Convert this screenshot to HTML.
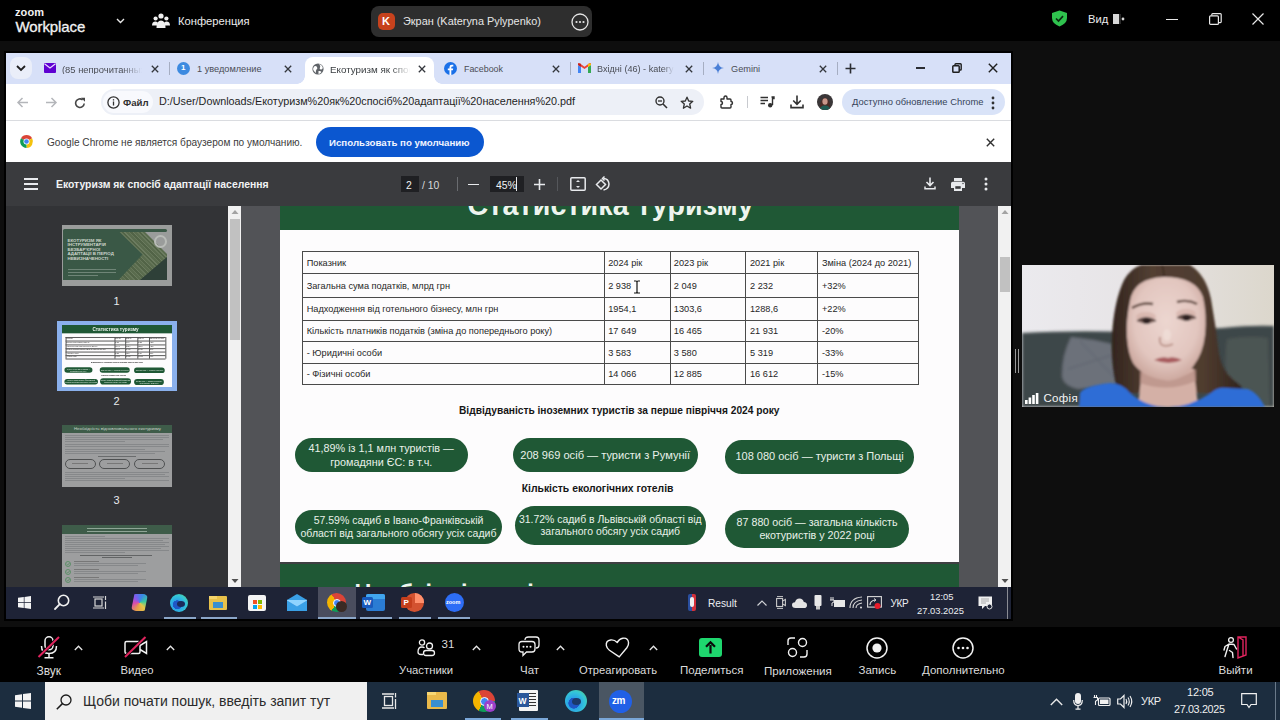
<!DOCTYPE html>
<html><head><meta charset="utf-8">
<style>
*{box-sizing:border-box}
html,body{margin:0;padding:0}
body{width:1280px;height:720px;overflow:hidden;background:#0e0e0e;position:relative;font-family:"Liberation Sans",sans-serif}
.a{position:absolute}
.t{position:absolute;white-space:nowrap;line-height:1}
svg{position:absolute;overflow:visible}
.thumb div[style*="height:1px;background:#4a4a4a"]{height:6px!important;background:#555!important}
.thumb div[style*="width:1px;height"]{width:6px!important;background:#555!important}
</style></head><body>


<!-- ZOOM TOP BAR -->
<div class="a" style="left:0;top:0;width:1280px;height:41px;background:#000"></div>
<div class="t" style="left:15px;top:7px;font-size:11px;font-weight:700;color:#f2f2f2;letter-spacing:0.1px">zoom</div>
<div class="t" style="left:15.5px;top:18.5px;font-size:15px;color:#f2f2f2;-webkit-text-stroke:0.3px #f2f2f2;letter-spacing:-0.1px">Workplace</div>
<svg style="left:116px;top:18px" width="9" height="6"><path d="M1 1 L4.5 4.5 L8 1" fill="none" stroke="#e8e8e8" stroke-width="1.4"/></svg>
<svg style="left:152px;top:13px" width="18" height="16" viewBox="0 0 18 16">
 <circle cx="9" cy="3" r="2.6" fill="#f0f0f0"/><circle cx="3.6" cy="5.5" r="2.1" fill="#f0f0f0"/><circle cx="14.4" cy="5.5" r="2.1" fill="#f0f0f0"/>
 <path d="M4.5 15 Q4.5 7.5 9 7.5 Q13.5 7.5 13.5 15 Z" fill="#f0f0f0"/>
 <path d="M0 12.5 Q0 8.5 3.6 8.5 Q5.5 8.5 6 10 L5 12.5 Z" fill="#f0f0f0"/><path d="M18 12.5 Q18 8.5 14.4 8.5 Q12.5 8.5 12 10 L13 12.5 Z" fill="#f0f0f0"/>
</svg>
<div class="t" style="left:178px;top:16px;font-size:11.2px;color:#ececec">Конференция</div>
<div class="a" style="left:371px;top:6px;width:221px;height:31px;background:#2e2e2e;border-radius:8px"></div>
<div class="a" style="left:378px;top:13px;width:17px;height:17px;background:#c7421d;border-radius:5px"></div>
<div class="t" style="left:382px;top:16px;font-size:11px;font-weight:700;color:#fff">K</div>
<div class="t" style="left:403px;top:15.5px;font-size:10.9px;color:#e6e6e6">Экран (Kateryna Pylypenko)</div>
<svg style="left:571px;top:13px" width="18" height="18"><circle cx="9" cy="9" r="8" fill="none" stroke="#e6e6e6" stroke-width="1.3"/><circle cx="5.5" cy="9" r="1.1" fill="#e6e6e6"/><circle cx="9" cy="9" r="1.1" fill="#e6e6e6"/><circle cx="12.5" cy="9" r="1.1" fill="#e6e6e6"/></svg>
<svg style="left:1051px;top:10px" width="17" height="17" viewBox="0 0 17 17"><path d="M8.5 0.5 L16 3 L16 8 Q16 13.5 8.5 16.5 Q1 13.5 1 8 L1 3 Z" fill="#2fc24e"/><path d="M5 8.5 L7.5 11 L12 6.2" fill="none" stroke="#0a2a10" stroke-width="1.7"/></svg>
<div class="t" style="left:1088px;top:13.5px;font-size:11.2px;color:#ececec">Вид</div>
<svg style="left:1113px;top:14px" width="12" height="10"><rect x="0" y="0" width="6" height="10" fill="#d8d8d8"/><rect x="6.5" y="0" width="1" height="10" fill="#555"/><circle cx="10" cy="5" r="1.4" fill="#d8d8d8"/></svg>
<div class="a" style="left:1166px;top:18.5px;width:12px;height:1.5px;background:#e8e8e8"></div>
<svg style="left:1209px;top:13px" width="13" height="12"><rect x="0.6" y="2.8" width="8.8" height="8.6" rx="1" fill="none" stroke="#e8e8e8" stroke-width="1.2"/><path d="M2.8 2.6 L2.8 1.5 Q2.8 0.6 3.7 0.6 L11.4 0.6 Q12.2 0.6 12.2 1.5 L12.2 8.8 Q12.2 9.6 11.4 9.6 L9.8 9.6" fill="none" stroke="#e8e8e8" stroke-width="1.2"/></svg>
<svg style="left:1252px;top:13px" width="12" height="12"><path d="M0.5 0.5 L11.5 11.5 M11.5 0.5 L0.5 11.5" stroke="#e8e8e8" stroke-width="1.2"/></svg>


<!-- SHARED SCREEN frame -->
<div class="a" style="left:4px;top:51px;width:1009px;height:570px;background:#000"></div>


<!-- Chrome tab strip -->
<div class="a" style="left:6px;top:53px;width:1005px;height:31px;background:#d7e0f8"></div>
<div class="a" style="left:10px;top:57px;width:22px;height:22px;background:#eaeef9;border-radius:8px"></div>
<svg style="left:16px;top:65px" width="10" height="6"><path d="M1 1 L5 5 L9 1" fill="none" stroke="#1f1f1f" stroke-width="1.8"/></svg>
<!-- tab1 -->
<svg style="left:44px;top:63px" width="12" height="10" viewBox="0 0 12 10"><rect x="0" y="0" width="12" height="10" rx="1" fill="#5f01d1"/><path d="M0.5 0.8 L6 5 L11.5 0.8" fill="none" stroke="#e8d8ff" stroke-width="1.2"/></svg>
<div class="t" style="left:62px;top:65px;font-size:9.4px;color:#4a4d55;width:80px;overflow:hidden;-webkit-mask-image:linear-gradient(90deg,#000 75%,transparent)">(85 непрочитанных</div>
<svg style="left:151px;top:64.5px" width="8" height="8"><path d="M0.8 0.8 L7.2 7.2 M7.2 0.8 L0.8 7.2" stroke="#33363c" stroke-width="1.3"/></svg>
<div class="a" style="left:169px;top:62px;width:1px;height:13px;background:#a6aec2"></div>
<!-- tab2 -->
<div class="a" style="left:177px;top:61.5px;width:13px;height:13px;border-radius:50%;background:#3d8ae0"></div>
<div class="t" style="left:181px;top:64px;font-size:8px;font-weight:700;color:#fff">1</div>
<div class="t" style="left:197px;top:65px;font-size:9.2px;color:#4a4d55">1 уведомление</div>
<svg style="left:284px;top:64.5px" width="8" height="8"><path d="M0.8 0.8 L7.2 7.2 M7.2 0.8 L0.8 7.2" stroke="#33363c" stroke-width="1.3"/></svg>
<!-- active tab -->
<div class="a" style="left:305px;top:57px;width:129px;height:27px;background:#fff;border-radius:8px 8px 0 0"></div>
<div class="a" style="left:297px;top:76px;width:8px;height:8px;background:radial-gradient(circle at 0 0,transparent 7.5px,#fff 8px)"></div>
<div class="a" style="left:434px;top:76px;width:8px;height:8px;background:radial-gradient(circle at 100% 0,transparent 7.5px,#fff 8px)"></div>
<svg style="left:312px;top:62.5px" width="12" height="12" viewBox="0 0 12 12"><circle cx="6" cy="6" r="5.6" fill="#5f6368"/><path d="M2 3.5 Q4 2.5 5 4 Q6 5.5 4.5 6.5 Q3.5 7.5 4 10 Q1.5 8.5 1 6 Z M7 1 Q9 3 8 4.5 Q7 5.5 8.5 6.5 Q10 7 10.8 5 Q10.5 2 7 1 Z M6.5 8 Q8.5 7.5 9.5 9 Q8 10.8 6.5 11 Z" fill="#fff"/></svg>
<div class="t" style="left:330px;top:65px;font-size:9.8px;color:#3c4043;width:80px;overflow:hidden;-webkit-mask-image:linear-gradient(90deg,#000 78%,transparent)">Екотуризм як спосіб</div>
<svg style="left:418px;top:64.5px" width="8" height="8"><path d="M0.8 0.8 L7.2 7.2 M7.2 0.8 L0.8 7.2" stroke="#33363c" stroke-width="1.3"/></svg>
<!-- tab4 facebook -->
<svg style="left:444px;top:61.5px" width="13" height="13" viewBox="0 0 13 13"><circle cx="6.5" cy="6.5" r="6.5" fill="#1a70e8"/><path d="M7.3 13 L7.3 8.2 L8.9 8.2 L9.2 6.4 L7.3 6.4 L7.3 5.3 Q7.3 4.4 8.3 4.4 L9.3 4.4 L9.3 2.8 Q8.6 2.7 7.9 2.7 Q5.5 2.7 5.5 5.1 L5.5 6.4 L3.8 6.4 L3.8 8.2 L5.5 8.2 L5.5 13 Z" fill="#fff"/></svg>
<div class="t" style="left:464px;top:65px;font-size:8.9px;color:#4a4d55">Facebook</div>
<svg style="left:552px;top:64.5px" width="8" height="8"><path d="M0.8 0.8 L7.2 7.2 M7.2 0.8 L0.8 7.2" stroke="#33363c" stroke-width="1.3"/></svg>
<div class="a" style="left:570px;top:62px;width:1px;height:13px;background:#a6aec2"></div>
<!-- tab5 gmail -->
<svg style="left:578px;top:63px" width="13" height="10" viewBox="0 0 13 10"><path d="M0 2 L0 10 L3 10 L3 4 Z" fill="#4285f4"/><path d="M10 4 L10 10 L13 10 L13 2 Z" fill="#34a853"/><path d="M0 1.5 L6.5 6 L13 1.5 L13 0.5 Q12 -0.3 11 0.5 L6.5 3.8 L2 0.5 Q1 -0.3 0 0.5 Z" fill="#ea4335"/><path d="M10 0.8 L13 0.5 L13 2 L10 4 Z" fill="#fbbc04"/><path d="M0 0.5 L3 0.8 L3 4 L0 2 Z" fill="#c5221f"/></svg>
<div class="t" style="left:597px;top:65px;font-size:9.1px;color:#4a4d55;width:77px;overflow:hidden;-webkit-mask-image:linear-gradient(90deg,#000 85%,transparent)">Вхідні (46) - kateryna</div>
<svg style="left:685px;top:64.5px" width="8" height="8"><path d="M0.8 0.8 L7.2 7.2 M7.2 0.8 L0.8 7.2" stroke="#33363c" stroke-width="1.3"/></svg>
<div class="a" style="left:703px;top:62px;width:1px;height:13px;background:#a6aec2"></div>
<!-- tab6 gemini -->
<svg style="left:712px;top:62px" width="12" height="12" viewBox="0 0 12 12"><path d="M6 0 Q6.5 5.5 12 6 Q6.5 6.5 6 12 Q5.5 6.5 0 6 Q5.5 5.5 6 0 Z" fill="#4a7fd6"/></svg>
<div class="t" style="left:731px;top:65px;font-size:9.2px;color:#4a4d55">Gemini</div>
<svg style="left:819px;top:64.5px" width="8" height="8"><path d="M0.8 0.8 L7.2 7.2 M7.2 0.8 L0.8 7.2" stroke="#33363c" stroke-width="1.3"/></svg>
<div class="a" style="left:837px;top:62px;width:1px;height:13px;background:#a6aec2"></div>
<svg style="left:845px;top:63px" width="11" height="11"><path d="M5.5 0.5 L5.5 10.5 M0.5 5.5 L10.5 5.5" stroke="#2b2d33" stroke-width="1.6"/></svg>
<!-- window controls -->
<div class="a" style="left:916px;top:67px;width:9px;height:1.6px;background:#2b2d33"></div>
<svg style="left:952px;top:63px" width="10" height="10"><rect x="0.8" y="2.8" width="6.4" height="6.4" rx="0.8" fill="none" stroke="#1f1f1f" stroke-width="1.5"/><path d="M3 2.5 L3 1.6 Q3 0.8 3.8 0.8 L8.4 0.8 Q9.2 0.8 9.2 1.6 L9.2 6.2 Q9.2 7 8.4 7 L7.5 7" fill="none" stroke="#1f1f1f" stroke-width="1.4"/></svg>
<svg style="left:988px;top:63px" width="10" height="10"><path d="M0.8 0.8 L9.2 9.2 M9.2 0.8 L0.8 9.2" stroke="#1f1f1f" stroke-width="1.4"/></svg>

<!-- toolbar -->
<div class="a" style="left:6px;top:84px;width:1005px;height:37px;background:#fff;border-bottom:1px solid #dadce0"></div>
<svg style="left:17px;top:97px" width="12" height="11"><path d="M11 5.5 L1.2 5.5 M5.5 1 L1 5.5 L5.5 10" fill="none" stroke="#b4b6ba" stroke-width="1.5"/></svg>
<svg style="left:45px;top:97px" width="12" height="11"><path d="M1 5.5 L10.8 5.5 M6.5 1 L11 5.5 L6.5 10" fill="none" stroke="#b4b6ba" stroke-width="1.5"/></svg>
<svg style="left:74px;top:96.5px" width="12" height="12" viewBox="0 0 12 12"><path d="M10.2 6.5 A4.3 4.3 0 1 1 8.6 2.8" fill="none" stroke="#474747" stroke-width="1.6"/><path d="M7 0.8 L11 0.8 L11 4.8 Z" fill="#474747"/></svg>
<div class="a" style="left:101px;top:89px;width:603px;height:26px;background:#edf0f7;border-radius:13px"></div>
<div class="a" style="left:103px;top:91px;width:50px;height:22px;background:#f8f9fd;border-radius:11px"></div>
<svg style="left:107px;top:96px" width="13" height="13" viewBox="0 0 13 13"><circle cx="6.5" cy="6.5" r="5.6" fill="none" stroke="#303030" stroke-width="1.3"/><rect x="5.85" y="5.5" width="1.3" height="4" fill="#303030"/><rect x="5.85" y="3.2" width="1.3" height="1.3" fill="#303030"/></svg>
<div class="t" style="left:123px;top:97.5px;font-size:9.6px;font-weight:700;color:#303030">Файл</div>
<div class="t" style="left:159px;top:96px;font-size:10.8px;color:#1f1f1f">D:/User/Downloads/Екотуризм%20як%20спосіб%20адаптації%20населення%20.pdf</div>
<svg style="left:655px;top:96px" width="13" height="13" viewBox="0 0 13 13"><circle cx="5" cy="5" r="4" fill="none" stroke="#303030" stroke-width="1.4"/><path d="M8 8 L12 12" stroke="#303030" stroke-width="1.6"/><path d="M3 5 L7 5" stroke="#303030" stroke-width="1.3"/></svg>
<svg style="left:680px;top:95.5px" width="14" height="14" viewBox="0 0 14 14"><path d="M7 1.2 L8.7 5 L12.8 5.3 L9.7 8 L10.6 12.2 L7 10 L3.4 12.2 L4.3 8 L1.2 5.3 L5.3 5 Z" fill="none" stroke="#303030" stroke-width="1.3" stroke-linejoin="round"/></svg>
<svg style="left:720px;top:95px" width="13" height="14" viewBox="0 0 13 14"><path d="M1 4 L4 4 L4 2.5 Q4 1 5.5 1 Q7 1 7 2.5 L7 4 L10 4 Q11 4 11 5 L11 6.5 Q12.5 6.5 12.5 8 Q12.5 9.5 11 9.5 L11 12 Q11 13 10 13 L2 13 Q1 13 1 12 L1 9.5 Q2.5 9.5 2.5 8 Q2.5 6.5 1 6.5 Z" fill="none" stroke="#303030" stroke-width="1.4" stroke-linejoin="round"/></svg>
<div class="a" style="left:747px;top:96px;width:1px;height:12px;background:#c8cacf"></div>
<svg style="left:760px;top:96px" width="15" height="12" viewBox="0 0 15 12"><path d="M0.5 1.5 L8 1.5 M0.5 4.5 L8 4.5 M0.5 7.5 L5 7.5" stroke="#303030" stroke-width="1.4"/><path d="M11.5 1 L14 1 L14 2.5 L12.5 2.5 L12.5 9" fill="none" stroke="#303030" stroke-width="1.4"/><circle cx="10.2" cy="9.3" r="2.2" fill="#303030"/></svg>
<svg style="left:790px;top:95px" width="14" height="14" viewBox="0 0 14 14"><path d="M7 0.5 L7 9 M3.2 5.5 L7 9.3 L10.8 5.5" fill="none" stroke="#303030" stroke-width="1.6"/><path d="M1 9.5 L1 12.6 L13 12.6 L13 9.5" fill="none" stroke="#303030" stroke-width="1.6"/></svg>
<svg style="left:817px;top:94px" width="16" height="16" viewBox="0 0 16 16"><defs><clipPath id="avc"><circle cx="8" cy="8" r="8"/></clipPath></defs><g clip-path="url(#avc)"><rect width="16" height="16" fill="#3a3638"/><path d="M3 16 Q2 6 8 3.5 Q14 6 13 16 Z" fill="#4a2a24"/><ellipse cx="8" cy="7.5" rx="2.6" ry="3.2" fill="#c9978a"/><path d="M2 16 Q4 11 8 11.5 Q12 11 14 16 Z" fill="#1f5a52"/></g></svg>
<div class="a" style="left:842px;top:89px;width:163px;height:26px;background:#d9e3f8;border-radius:13px"></div>
<div class="t" style="left:852px;top:97px;font-size:9.4px;color:#37435a">Доступно обновление Chrome</div>
<svg style="left:991px;top:95.5px" width="4" height="14"><circle cx="2" cy="2" r="1.4" fill="#303030"/><circle cx="2" cy="7" r="1.4" fill="#303030"/><circle cx="2" cy="12" r="1.4" fill="#303030"/></svg>

<!-- infobar -->
<div class="a" style="left:6px;top:121px;width:1005px;height:41px;background:#fff"></div>
<svg style="left:19.5px;top:135px" width="13" height="13" viewBox="0 0 13 13"><path d="M6.5 6.5 L1.0 3.3 A6.4 6.4 0 0 1 12.1 3.3 Z" fill="#db4437"/><path d="M6.5 6.5 L12.1 3.3 A6.4 6.4 0 0 1 6.5 12.9 Z" fill="#f4c20d"/><path d="M6.5 6.5 L6.5 12.9 A6.4 6.4 0 0 1 1.0 3.3 Z" fill="#0f9d58"/><circle cx="6.5" cy="6.5" r="3" fill="#fff"/><circle cx="6.5" cy="6.5" r="2.3" fill="#4285f4"/></svg>
<div class="t" style="left:47px;top:137.5px;font-size:10.1px;color:#3c3c3c">Google Chrome не является браузером по умолчанию.</div>
<div class="a" style="left:316px;top:127px;width:168px;height:29.5px;background:#0b57d0;border-radius:15px"></div>
<div class="t" style="left:329px;top:138px;font-size:9.7px;font-weight:700;color:#f0f4ff">Использовать по умолчанию</div>
<svg style="left:986px;top:137.5px" width="9" height="9"><path d="M0.8 0.8 L8.2 8.2 M8.2 0.8 L0.8 8.2" stroke="#303030" stroke-width="1.4"/></svg>

<!-- pdf toolbar -->
<div class="a" style="left:6px;top:162px;width:1005px;height:44px;background:#3a3b3e"></div>
<svg style="left:24px;top:178px" width="14" height="12"><path d="M0 1 L14 1 M0 6 L14 6 M0 11 L14 11" stroke="#e8eaed" stroke-width="1.8"/></svg>
<div class="t" style="left:56px;top:180px;font-size:10.4px;font-weight:700;color:#f1f3f4">Екотуризм як спосіб адаптації населення</div>
<div class="a" style="left:401px;top:176px;width:18px;height:16px;background:#1f2023"></div>
<div class="t" style="left:406px;top:180.5px;font-size:10.4px;color:#f1f3f4">2</div>
<div class="t" style="left:422px;top:180.5px;font-size:10.4px;color:#d8dadc">/ 10</div>
<div class="a" style="left:457px;top:177px;width:1px;height:14px;background:#6a6c70"></div>
<div class="a" style="left:468px;top:183.5px;width:11px;height:1.6px;background:#e8eaed"></div>
<div class="a" style="left:490px;top:176px;width:34px;height:16px;background:#1f2023"></div>
<div class="t" style="left:496px;top:180.5px;font-size:10.4px;color:#f1f3f4">45%</div>
<div class="a" style="left:516px;top:177px;width:1px;height:14px;background:#e8eaed"></div>
<svg style="left:533.5px;top:178.5px" width="11" height="11"><path d="M5.5 0 L5.5 11 M0 5.5 L11 5.5" stroke="#e8eaed" stroke-width="1.6"/></svg>
<div class="a" style="left:557px;top:177px;width:1px;height:14px;background:#55575b"></div>
<svg style="left:570px;top:177px" width="16" height="14" viewBox="0 0 16 14"><rect x="0.8" y="0.8" width="14.4" height="12.4" rx="1" fill="none" stroke="#e8eaed" stroke-width="1.5"/><path d="M6 5 L8 3 L10 5 Z M6 9 L8 11 L10 9 Z" fill="#e8eaed"/></svg>
<svg style="left:595px;top:176px" width="16" height="16" viewBox="0 0 16 16"><path d="M1.5 8.5 L6 4 L10.5 8.5 L6 13 Z" fill="none" stroke="#e8eaed" stroke-width="1.5"/><path d="M8.5 2.5 Q13.5 2.5 14 8 Q13.8 13 8.5 14" fill="none" stroke="#e8eaed" stroke-width="1.5"/><path d="M9.5 0.5 L7.5 2.5 L9.5 4.5" fill="none" stroke="#e8eaed" stroke-width="1.5"/></svg>
<svg style="left:924px;top:177px" width="12" height="13" viewBox="0 0 12 13"><path d="M6 0.5 L6 8.5 M2.5 5 L6 8.5 L9.5 5" fill="none" stroke="#e8eaed" stroke-width="1.6"/><path d="M1 9.5 L1 11.8 L11 11.8 L11 9.5" fill="none" stroke="#e8eaed" stroke-width="1.5"/></svg>
<svg style="left:950.5px;top:177.5px" width="14" height="13" viewBox="0 0 14 13"><rect x="3" y="0" width="8" height="3.2" fill="#e8eaed"/><path d="M0 5.5 Q0 3.8 1.7 3.8 L12.3 3.8 Q14 3.8 14 5.5 L14 10 L11 10 L11 13 L3 13 L3 10 L0 10 Z" fill="#e8eaed"/><rect x="4.3" y="8.2" width="5.4" height="2.6" fill="#3a3b3e"/><circle cx="12" cy="5.5" r="0.7" fill="#3a3b3e"/></svg>
<svg style="left:984px;top:177px" width="4" height="14"><circle cx="2" cy="2" r="1.5" fill="#e8eaed"/><circle cx="2" cy="7" r="1.5" fill="#e8eaed"/><circle cx="2" cy="12" r="1.5" fill="#e8eaed"/></svg>

<!-- sidebar -->
<div class="a" style="left:6px;top:206px;width:222px;height:381px;background:#323336;overflow:hidden">
 <!-- thumb1 -->
 <div class="a" style="left:56px;top:19px;width:110px;height:61px;background:#9a9c9b;overflow:hidden">
  <div class="a" style="left:0.5px;top:6px;width:104px;height:49px;background:#3a5846"></div>
  <div class="a" style="left:52px;top:6px;width:53px;height:49px;background:repeating-linear-gradient(45deg,#5a6c4e 0 2px,#66775a 2px 3px,#526447 3px 5px,#6c7c60 5px 6px)"></div>
  <div class="a" style="left:0.5px;top:6px;width:80px;height:49px;background:#3a5846;clip-path:polygon(0 0,70% 0,100% 48%,70% 100%,0 100%)"></div>
  <div class="a" style="left:82px;top:6px;width:28px;height:28px;background:#9a9c9b;clip-path:polygon(0 0,100% 0,100% 100%)"></div>
  <div class="a" style="left:92px;top:10px;width:13px;height:13px;border-radius:50%;border:2.5px solid #b9bcb8"></div>
  <div class="a" style="left:78px;top:32px;width:27px;height:23px;background:#2e4038;clip-path:polygon(100% 0,100% 100%,0 100%)"></div>
  <div class="a" style="left:0.5px;top:4px;width:104px;height:3px;background:#3a5846;border-radius:2px"></div>
  <div class="t" style="left:5.5px;top:14px;font-size:4.4px;font-weight:700;color:#cdd5cd;line-height:4.4px">ЕКОТУРИЗМ ЯК<br>ІНСТРУМЕНТАРІЙ<br>БЕЗБАР'ЄРНОЇ<br>АДАПТАЦІЇ В ПЕРІОД<br>НЕВИЗНАЧЕНОСТІ</div>
  <div class="a" style="left:6px;top:44px;width:48px;height:1px;background:#6f8577"></div>
  <div class="a" style="left:6px;top:47px;width:48px;height:1px;background:#6f8577"></div>
  <div class="a" style="left:6px;top:50px;width:30px;height:1px;background:#6f8577"></div>
 </div>
 <div class="t" style="left:107.5px;top:90px;font-size:11px;color:#e8eaed">1</div>
 <!-- thumb2 -->
 <div class="a" style="left:51px;top:114.5px;width:120px;height:70.5px;background:#8ab0ec"></div>
 <div class="a" style="left:56px;top:119px;width:110px;height:61.5px;background:#fdfcfd;overflow:hidden">
  <div class="a thumb" style="left:0;top:0;width:679px;height:384.5px;transform:scale(0.162);transform-origin:0 0">
<div class="a" style="left:0;top:0;width:679px;height:53px;background:#1f5835"></div>
<div class="t" style="left:187.5px;top:14px;font-size:28.7px;font-weight:700;color:#eef4ee;letter-spacing:0.1px">Статистика туризму</div>
<div class="a" style="left:0;top:53px;width:679px;height:331.5px;background:#fdfcfd"></div>
<div class="a" style="left:22px;top:74px;width:617px;height:1px;background:#4a4a4a"></div>
<div class="a" style="left:22px;top:96px;width:617px;height:1px;background:#4a4a4a"></div>
<div class="a" style="left:22px;top:120px;width:617px;height:1px;background:#4a4a4a"></div>
<div class="a" style="left:22px;top:143px;width:617px;height:1px;background:#4a4a4a"></div>
<div class="a" style="left:22px;top:164px;width:617px;height:1px;background:#4a4a4a"></div>
<div class="a" style="left:22px;top:186px;width:617px;height:1px;background:#4a4a4a"></div>
<div class="a" style="left:22px;top:207px;width:617px;height:1px;background:#4a4a4a"></div>
<div class="a" style="left:22px;top:74px;width:1px;height:134px;background:#4a4a4a"></div>
<div class="a" style="left:324px;top:74px;width:1px;height:134px;background:#4a4a4a"></div>
<div class="a" style="left:390px;top:74px;width:1px;height:134px;background:#4a4a4a"></div>
<div class="a" style="left:465px;top:74px;width:1px;height:134px;background:#4a4a4a"></div>
<div class="a" style="left:537px;top:74px;width:1px;height:134px;background:#4a4a4a"></div>
<div class="a" style="left:638px;top:74px;width:1px;height:134px;background:#4a4a4a"></div>
<div class="t" style="left:26.7px;top:81.8px;font-size:9.2px;color:#262626">Показник</div>
<div class="t" style="left:328.2px;top:81.8px;font-size:9.2px;color:#262626">2024 рік</div>
<div class="t" style="left:393.8px;top:81.8px;font-size:9.2px;color:#262626">2023 рік</div>
<div class="t" style="left:470.0px;top:81.8px;font-size:9.2px;color:#262626">2021 рік</div>
<div class="t" style="left:542.0px;top:81.8px;font-size:9.2px;color:#262626">Зміна (2024 до 2021)</div>
<div class="t" style="left:26.7px;top:105.0px;font-size:9.2px;color:#262626">Загальна сума податків, млрд грн</div>
<div class="t" style="left:328.2px;top:105.0px;font-size:9.2px;color:#262626">2 938</div>
<div class="t" style="left:393.8px;top:105.0px;font-size:9.2px;color:#262626">2 049</div>
<div class="t" style="left:470.0px;top:105.0px;font-size:9.2px;color:#262626">2 232</div>
<div class="t" style="left:542.0px;top:105.0px;font-size:9.2px;color:#262626">+32%</div>
<div class="t" style="left:26.7px;top:128.3px;font-size:9.2px;color:#262626">Надходження від готельного бізнесу, млн грн</div>
<div class="t" style="left:328.2px;top:128.3px;font-size:9.2px;color:#262626">1954,1</div>
<div class="t" style="left:393.8px;top:128.3px;font-size:9.2px;color:#262626">1303,6</div>
<div class="t" style="left:470.0px;top:128.3px;font-size:9.2px;color:#262626">1288,6</div>
<div class="t" style="left:542.0px;top:128.3px;font-size:9.2px;color:#262626">+22%</div>
<div class="t" style="left:26.7px;top:150.1px;font-size:9.2px;color:#262626">Кількість платників податків (зміна до попереднього року)</div>
<div class="t" style="left:328.2px;top:150.1px;font-size:9.2px;color:#262626">17 649</div>
<div class="t" style="left:393.8px;top:150.1px;font-size:9.2px;color:#262626">16 465</div>
<div class="t" style="left:470.0px;top:150.1px;font-size:9.2px;color:#262626">21 931</div>
<div class="t" style="left:542.0px;top:150.1px;font-size:9.2px;color:#262626">-20%</div>
<div class="t" style="left:26.7px;top:171.6px;font-size:9.2px;color:#262626">- Юридичні особи</div>
<div class="t" style="left:328.2px;top:171.6px;font-size:9.2px;color:#262626">3 583</div>
<div class="t" style="left:393.8px;top:171.6px;font-size:9.2px;color:#262626">3 580</div>
<div class="t" style="left:470.0px;top:171.6px;font-size:9.2px;color:#262626">5 319</div>
<div class="t" style="left:542.0px;top:171.6px;font-size:9.2px;color:#262626">-33%</div>
<div class="t" style="left:26.7px;top:193.1px;font-size:9.2px;color:#262626">- Фізичні особи</div>
<div class="t" style="left:328.2px;top:193.1px;font-size:9.2px;color:#262626">14 066</div>
<div class="t" style="left:393.8px;top:193.1px;font-size:9.2px;color:#262626">12 885</div>
<div class="t" style="left:470.0px;top:193.1px;font-size:9.2px;color:#262626">16 612</div>
<div class="t" style="left:542.0px;top:193.1px;font-size:9.2px;color:#262626">-15%</div>
<div class="t" style="left:179px;top:229px;font-size:10.2px;font-weight:700;color:#161616">Відвідуваність іноземних туристів за перше півріччя 2024 року</div>
<div class="t" style="left:241.7px;top:306.7px;font-size:10.4px;font-weight:700;color:#161616">Кількість екологічних готелів</div>
<div class="a" style="left:14.5px;top:261.0px;width:173.5px;height:34.0px;background:#1f5835;border-radius:17.0px"></div>
<div class="t" style="left:14.5px;width:173.5px;text-align:center;top:266.0px;font-size:10.8px;color:#e9f1e9">41,89% із 1,1 млн туристів  —</div>
<div class="t" style="left:14.5px;width:173.5px;text-align:center;top:280.0px;font-size:10.8px;color:#e9f1e9">громадяни ЄС: в т.ч.</div>
<div class="a" style="left:232.6px;top:261.0px;width:185.2px;height:34.0px;background:#1f5835;border-radius:17.0px"></div>
<div class="t" style="left:232.6px;width:185.2px;text-align:center;top:271.8px;font-size:11.1px;color:#e9f1e9;margin-top:0.8px">208 969 осіб — туристи з Румунії</div>
<div class="a" style="left:445.4px;top:263.0px;width:188.4px;height:33.7px;background:#1f5835;border-radius:16.8px"></div>
<div class="t" style="left:445.4px;width:188.4px;text-align:center;top:273.8px;font-size:11.0px;color:#e9f1e9">108 080 осіб — туристи з Польщі</div>
<div class="a" style="left:15.0px;top:333.0px;width:207.0px;height:34.4px;background:#1f5835;border-radius:17.2px"></div>
<div class="t" style="left:15.0px;width:207.0px;text-align:center;top:338.1px;font-size:10.5px;color:#e9f1e9">57.59% садиб в Івано-Франківській</div>
<div class="t" style="left:15.0px;width:207.0px;text-align:center;top:350.7px;font-size:10.5px;color:#e9f1e9">області від загального обсягу усіх садиб</div>
<div class="a" style="left:235.0px;top:329.0px;width:190.6px;height:38.7px;background:#1f5835;border-radius:19.4px"></div>
<div class="t" style="left:235.0px;width:190.6px;text-align:center;top:336.5px;font-size:10.45px;margin-top:1px;color:#e9f1e9">31.72% садиб в Львівській області від</div>
<div class="t" style="left:235.0px;width:190.6px;text-align:center;top:349.1px;font-size:10.45px;margin-top:1px;color:#e9f1e9">загального обсягу усіх садиб</div>
<div class="a" style="left:445.4px;top:332.5px;width:183.3px;height:38.3px;background:#1f5835;border-radius:19.1px"></div>
<div class="t" style="left:445.4px;width:183.3px;text-align:center;top:340.0px;font-size:10.7px;color:#e9f1e9">87 880 осіб — загальна кількість</div>
<div class="t" style="left:445.4px;width:183.3px;text-align:center;top:352.7px;font-size:10.7px;color:#e9f1e9">екотуристів у 2022 році</div>
  </div>
 </div>
 <div class="t" style="left:107.5px;top:189.5px;font-size:11px;color:#e8eaed">2</div>
 <!-- thumb3 -->
 <div class="a" style="left:56px;top:219px;width:110px;height:62px;background:#9d9e9f;overflow:hidden">
  <div class="a" style="left:0;top:0;width:110px;height:7.5px;background:#3e5c49"></div>
  <div class="t" style="left:12px;top:1.8px;font-size:4.3px;color:#c9d2ca">Необхідність відновлювального екотуризму</div>
  <div class="a" style="left:3px;top:10px;width:104px;height:1px;background:#86888a"></div>
  <div class="a" style="left:3px;top:12px;width:104px;height:1px;background:#86888a"></div>
  <div class="a" style="left:3px;top:14px;width:98px;height:1px;background:#86888a"></div>
  <div class="a" style="left:3px;top:16px;width:60px;height:1px;background:#86888a"></div>
  <div class="a" style="left:3px;top:19px;width:104px;height:1px;background:#86888a"></div>
  <div class="a" style="left:3px;top:21px;width:104px;height:1px;background:#86888a"></div>
  <div class="a" style="left:3px;top:24px;width:80px;height:1px;background:#86888a"></div>
  <div class="a" style="left:3px;top:26px;width:100px;height:1px;background:#86888a"></div>
  <div class="a" style="left:3px;top:28px;width:90px;height:1px;background:#86888a"></div>
  <div class="a" style="left:36px;top:31px;width:38px;height:1px;background:#6a6c6d"></div>
  <div class="a" style="left:2.5px;top:34px;width:31px;height:10px;border:1px solid #4f5152;border-radius:5px"></div>
  <div class="a" style="left:37px;top:34px;width:31px;height:10px;border:1px solid #4f5152;border-radius:5px"></div>
  <div class="a" style="left:72px;top:34px;width:31px;height:10px;border:1px solid #4f5152;border-radius:5px"></div>
  <div class="a" style="left:10px;top:38px;width:16px;height:1px;background:#777"></div>
  <div class="a" style="left:45px;top:38px;width:16px;height:1px;background:#777"></div>
  <div class="a" style="left:80px;top:38px;width:16px;height:1px;background:#777"></div>
  <div class="a" style="left:3px;top:47px;width:104px;height:1px;background:#86888a"></div>
  <div class="a" style="left:3px;top:49px;width:100px;height:1px;background:#86888a"></div>
  <div class="a" style="left:3px;top:51px;width:104px;height:1px;background:#86888a"></div>
  <div class="a" style="left:3px;top:53px;width:60px;height:1px;background:#86888a"></div>
  <div class="a" style="left:3px;top:55px;width:104px;height:1px;background:#86888a"></div>
 </div>
 <div class="t" style="left:107.5px;top:289px;font-size:11px;color:#e8eaed">3</div>
 <!-- thumb4 -->
 <div class="a" style="left:56px;top:319px;width:110px;height:70px;background:#9d9e9f;overflow:hidden">
  <div class="a" style="left:0;top:0;width:110px;height:9px;background:#3e5c49"></div>
  <div class="a" style="left:25px;top:3px;width:60px;height:1px;background:#8fa596"></div>
  <div class="a" style="left:25px;top:5.5px;width:60px;height:1px;background:#8fa596"></div>
  <div class="a" style="left:3px;top:11px;width:40px;height:1px;background:#86888a"></div>
  <div class="a" style="left:3px;top:13px;width:104px;height:1px;background:#86888a"></div>
  <div class="a" style="left:3px;top:15px;width:98px;height:1px;background:#86888a"></div>
  <div class="a" style="left:3px;top:17px;width:104px;height:1px;background:#86888a"></div>
  <div class="a" style="left:3px;top:19px;width:100px;height:1px;background:#86888a"></div>
  <div class="a" style="left:3px;top:21px;width:104px;height:1px;background:#86888a"></div>
  <div class="a" style="left:3px;top:23px;width:96px;height:1px;background:#86888a"></div>
  <div class="a" style="left:3px;top:25px;width:104px;height:1px;background:#86888a"></div>
  <div class="a" style="left:3px;top:27px;width:60px;height:1px;background:#86888a"></div>
  <div class="a" style="left:18px;top:30px;width:72px;height:1px;background:#626465"></div>
  <div class="a" style="left:40px;top:32px;width:30px;height:1px;background:#626465"></div>
  <svg style="left:2.5px;top:36px" width="6" height="6" viewBox="0 0 6 6"><circle cx="3" cy="3" r="2.5" fill="none" stroke="#4e8a5c" stroke-width="0.8"/><path d="M1.6 3 L2.7 4 L4.5 2" fill="none" stroke="#4e8a5c" stroke-width="0.8"/></svg>
  <div class="a" style="left:12px;top:36px;width:25px;height:1px;background:#777"></div>
  <div class="a" style="left:12px;top:38px;width:72px;height:1px;background:#86888a"></div>
  <div class="a" style="left:12px;top:40px;width:64px;height:1px;background:#86888a"></div>
  <svg style="left:2.5px;top:44px" width="6" height="6" viewBox="0 0 6 6"><circle cx="3" cy="3" r="2.5" fill="none" stroke="#4e8a5c" stroke-width="0.8"/><path d="M1.6 3 L2.7 4 L4.5 2" fill="none" stroke="#4e8a5c" stroke-width="0.8"/></svg>
  <div class="a" style="left:12px;top:44px;width:25px;height:1px;background:#777"></div>
  <div class="a" style="left:12px;top:46px;width:72px;height:1px;background:#86888a"></div>
  <div class="a" style="left:12px;top:48px;width:64px;height:1px;background:#86888a"></div>
  <svg style="left:2.5px;top:52px" width="6" height="6" viewBox="0 0 6 6"><circle cx="3" cy="3" r="2.5" fill="none" stroke="#4e8a5c" stroke-width="0.8"/><path d="M1.6 3 L2.7 4 L4.5 2" fill="none" stroke="#4e8a5c" stroke-width="0.8"/></svg>
  <div class="a" style="left:12px;top:52px;width:25px;height:1px;background:#777"></div>
  <div class="a" style="left:12px;top:54px;width:72px;height:1px;background:#86888a"></div>
  <div class="a" style="left:12px;top:56px;width:64px;height:1px;background:#86888a"></div>
 </div>
</div>
<!-- sidebar scrollbar -->
<div class="a" style="left:228px;top:206px;width:13px;height:381px;background:#f1f1f1"></div>
<svg style="left:230.5px;top:209px" width="8" height="6"><path d="M0.5 5 L4 1 L7.5 5 Z" fill="#a3a3a3"/></svg>
<div class="a" style="left:229.5px;top:219px;width:10px;height:121px;background:#c1c1c1"></div>
<svg style="left:230.5px;top:578px" width="8" height="6"><path d="M0.5 1 L4 5 L7.5 1 Z" fill="#505050"/></svg>

<!-- main content bg -->
<div class="a" style="left:241px;top:206px;width:757px;height:381px;background:#525357;overflow:hidden">
 <div class="a" style="left:39px;top:-29px;width:679px;height:384.5px;overflow:hidden">
<div class="a" style="left:0;top:0;width:679px;height:53px;background:#1f5835"></div>
<div class="t" style="left:187.5px;top:14px;font-size:28.7px;font-weight:700;color:#eef4ee;letter-spacing:0.1px">Статистика туризму</div>
<div class="a" style="left:0;top:53px;width:679px;height:331.5px;background:#fdfcfd"></div>
<div class="a" style="left:22px;top:74px;width:617px;height:1px;background:#4a4a4a"></div>
<div class="a" style="left:22px;top:96px;width:617px;height:1px;background:#4a4a4a"></div>
<div class="a" style="left:22px;top:120px;width:617px;height:1px;background:#4a4a4a"></div>
<div class="a" style="left:22px;top:143px;width:617px;height:1px;background:#4a4a4a"></div>
<div class="a" style="left:22px;top:164px;width:617px;height:1px;background:#4a4a4a"></div>
<div class="a" style="left:22px;top:186px;width:617px;height:1px;background:#4a4a4a"></div>
<div class="a" style="left:22px;top:207px;width:617px;height:1px;background:#4a4a4a"></div>
<div class="a" style="left:22px;top:74px;width:1px;height:134px;background:#4a4a4a"></div>
<div class="a" style="left:324px;top:74px;width:1px;height:134px;background:#4a4a4a"></div>
<div class="a" style="left:390px;top:74px;width:1px;height:134px;background:#4a4a4a"></div>
<div class="a" style="left:465px;top:74px;width:1px;height:134px;background:#4a4a4a"></div>
<div class="a" style="left:537px;top:74px;width:1px;height:134px;background:#4a4a4a"></div>
<div class="a" style="left:638px;top:74px;width:1px;height:134px;background:#4a4a4a"></div>
<div class="t" style="left:26.7px;top:81.8px;font-size:9.2px;color:#262626">Показник</div>
<div class="t" style="left:328.2px;top:81.8px;font-size:9.2px;color:#262626">2024 рік</div>
<div class="t" style="left:393.8px;top:81.8px;font-size:9.2px;color:#262626">2023 рік</div>
<div class="t" style="left:470.0px;top:81.8px;font-size:9.2px;color:#262626">2021 рік</div>
<div class="t" style="left:542.0px;top:81.8px;font-size:9.2px;color:#262626">Зміна (2024 до 2021)</div>
<div class="t" style="left:26.7px;top:105.0px;font-size:9.2px;color:#262626">Загальна сума податків, млрд грн</div>
<div class="t" style="left:328.2px;top:105.0px;font-size:9.2px;color:#262626">2 938</div>
<div class="t" style="left:393.8px;top:105.0px;font-size:9.2px;color:#262626">2 049</div>
<div class="t" style="left:470.0px;top:105.0px;font-size:9.2px;color:#262626">2 232</div>
<div class="t" style="left:542.0px;top:105.0px;font-size:9.2px;color:#262626">+32%</div>
<div class="t" style="left:26.7px;top:128.3px;font-size:9.2px;color:#262626">Надходження від готельного бізнесу, млн грн</div>
<div class="t" style="left:328.2px;top:128.3px;font-size:9.2px;color:#262626">1954,1</div>
<div class="t" style="left:393.8px;top:128.3px;font-size:9.2px;color:#262626">1303,6</div>
<div class="t" style="left:470.0px;top:128.3px;font-size:9.2px;color:#262626">1288,6</div>
<div class="t" style="left:542.0px;top:128.3px;font-size:9.2px;color:#262626">+22%</div>
<div class="t" style="left:26.7px;top:150.1px;font-size:9.2px;color:#262626">Кількість платників податків (зміна до попереднього року)</div>
<div class="t" style="left:328.2px;top:150.1px;font-size:9.2px;color:#262626">17 649</div>
<div class="t" style="left:393.8px;top:150.1px;font-size:9.2px;color:#262626">16 465</div>
<div class="t" style="left:470.0px;top:150.1px;font-size:9.2px;color:#262626">21 931</div>
<div class="t" style="left:542.0px;top:150.1px;font-size:9.2px;color:#262626">-20%</div>
<div class="t" style="left:26.7px;top:171.6px;font-size:9.2px;color:#262626">- Юридичні особи</div>
<div class="t" style="left:328.2px;top:171.6px;font-size:9.2px;color:#262626">3 583</div>
<div class="t" style="left:393.8px;top:171.6px;font-size:9.2px;color:#262626">3 580</div>
<div class="t" style="left:470.0px;top:171.6px;font-size:9.2px;color:#262626">5 319</div>
<div class="t" style="left:542.0px;top:171.6px;font-size:9.2px;color:#262626">-33%</div>
<div class="t" style="left:26.7px;top:193.1px;font-size:9.2px;color:#262626">- Фізичні особи</div>
<div class="t" style="left:328.2px;top:193.1px;font-size:9.2px;color:#262626">14 066</div>
<div class="t" style="left:393.8px;top:193.1px;font-size:9.2px;color:#262626">12 885</div>
<div class="t" style="left:470.0px;top:193.1px;font-size:9.2px;color:#262626">16 612</div>
<div class="t" style="left:542.0px;top:193.1px;font-size:9.2px;color:#262626">-15%</div>
<div class="t" style="left:179px;top:229px;font-size:10.2px;font-weight:700;color:#161616">Відвідуваність іноземних туристів за перше півріччя 2024 року</div>
<div class="t" style="left:241.7px;top:306.7px;font-size:10.4px;font-weight:700;color:#161616">Кількість екологічних готелів</div>
<div class="a" style="left:14.5px;top:261.0px;width:173.5px;height:34.0px;background:#1f5835;border-radius:17.0px"></div>
<div class="t" style="left:14.5px;width:173.5px;text-align:center;top:266.0px;font-size:10.8px;color:#e9f1e9">41,89% із 1,1 млн туристів  —</div>
<div class="t" style="left:14.5px;width:173.5px;text-align:center;top:280.0px;font-size:10.8px;color:#e9f1e9">громадяни ЄС: в т.ч.</div>
<div class="a" style="left:232.6px;top:261.0px;width:185.2px;height:34.0px;background:#1f5835;border-radius:17.0px"></div>
<div class="t" style="left:232.6px;width:185.2px;text-align:center;top:271.8px;font-size:11.1px;color:#e9f1e9;margin-top:0.8px">208 969 осіб — туристи з Румунії</div>
<div class="a" style="left:445.4px;top:263.0px;width:188.4px;height:33.7px;background:#1f5835;border-radius:16.8px"></div>
<div class="t" style="left:445.4px;width:188.4px;text-align:center;top:273.8px;font-size:11.0px;color:#e9f1e9">108 080 осіб — туристи з Польщі</div>
<div class="a" style="left:15.0px;top:333.0px;width:207.0px;height:34.4px;background:#1f5835;border-radius:17.2px"></div>
<div class="t" style="left:15.0px;width:207.0px;text-align:center;top:338.1px;font-size:10.5px;color:#e9f1e9">57.59% садиб в Івано-Франківській</div>
<div class="t" style="left:15.0px;width:207.0px;text-align:center;top:350.7px;font-size:10.5px;color:#e9f1e9">області від загального обсягу усіх садиб</div>
<div class="a" style="left:235.0px;top:329.0px;width:190.6px;height:38.7px;background:#1f5835;border-radius:19.4px"></div>
<div class="t" style="left:235.0px;width:190.6px;text-align:center;top:336.5px;font-size:10.45px;margin-top:1px;color:#e9f1e9">31.72% садиб в Львівській області від</div>
<div class="t" style="left:235.0px;width:190.6px;text-align:center;top:349.1px;font-size:10.45px;margin-top:1px;color:#e9f1e9">загального обсягу усіх садиб</div>
<div class="a" style="left:445.4px;top:332.5px;width:183.3px;height:38.3px;background:#1f5835;border-radius:19.1px"></div>
<div class="t" style="left:445.4px;width:183.3px;text-align:center;top:340.0px;font-size:10.7px;color:#e9f1e9">87 880 осіб — загальна кількість</div>
<div class="t" style="left:445.4px;width:183.3px;text-align:center;top:352.7px;font-size:10.7px;color:#e9f1e9">екотуристів у 2022 році</div>
 </div>
 <div class="a" style="left:39px;top:355.5px;width:679px;height:2.5px;background:#3e3f42"></div>
 <div class="a" style="left:39px;top:358px;width:679px;height:60px;background:#1f5835;overflow:hidden">
  <div class="t" style="left:74.5px;top:17.5px;font-size:23.4px;font-weight:700;color:#eef4ee">Необхідність відновлювального екотуризму</div>
 </div>
</div>
<svg style="left:633px;top:280px" width="8" height="14" viewBox="0 0 8 14"><path d="M1 1 L3 1 Q4 1 4 2.5 Q4 1 5 1 L7 1 M4 2.5 L4 11.5 M1 13 L3 13 Q4 13 4 11.5 Q4 13 5 13 L7 13" fill="none" stroke="#fff" stroke-width="2.6"/><path d="M1 1 L3 1 Q4 1 4 2.5 Q4 1 5 1 L7 1 M4 2.5 L4 11.5 M1 13 L3 13 Q4 13 4 11.5 Q4 13 5 13 L7 13" fill="none" stroke="#111" stroke-width="1.2"/></svg>
<!-- main scrollbar -->
<div class="a" style="left:998px;top:206px;width:13px;height:381px;background:#f1f1f1"></div>
<svg style="left:1000.5px;top:209px" width="8" height="6"><path d="M0.5 5 L4 1 L7.5 5 Z" fill="#a3a3a3"/></svg>
<div class="a" style="left:999.5px;top:257px;width:10px;height:35px;background:#c1c1c1"></div>
<svg style="left:1000.5px;top:578px" width="8" height="6"><path d="M0.5 1 L4 5 L7.5 1 Z" fill="#505050"/></svg>

<!-- windows taskbar in screen -->
<div class="a" style="left:6px;top:587px;width:1005px;height:32px;background:#1e2336"></div>
<svg style="left:18px;top:596px" width="13" height="13" viewBox="0 0 13 13"><path d="M0 1.8 L5.8 1 L5.8 6.1 L0 6.1 Z M6.5 0.9 L13 0 L13 6.1 L6.5 6.1 Z M0 6.8 L5.8 6.8 L5.8 12 L0 11.2 Z M6.5 6.8 L13 6.8 L13 13 L6.5 12.1 Z" fill="#f4f4f4"/></svg>
<svg style="left:54px;top:594px" width="16" height="16" viewBox="0 0 16 16"><circle cx="9.5" cy="6.5" r="5.2" fill="none" stroke="#f0f0f0" stroke-width="1.6"/><path d="M5.8 10.2 L1 15" stroke="#f0f0f0" stroke-width="1.8" stroke-linecap="round"/></svg>
<svg style="left:93px;top:596px" width="14" height="13" viewBox="0 0 14 13"><rect x="2" y="3" width="7" height="7" fill="none" stroke="#d8d8d8" stroke-width="1.2"/><path d="M0 1 L11 1 M0 12 L11 12 M12.5 0 L12.5 4 M12.5 5.5 L12.5 13" stroke="#d8d8d8" stroke-width="1.2"/></svg>
<div class="a" style="left:131px;top:594px;width:17px;height:17px;border-radius:5px;background:conic-gradient(from 200deg,#f1a54a,#e24fb4,#8a5cf6,#3a8ef0,#3ed2a0,#f1d04a,#f1a54a);clip-path:polygon(20% 0,100% 0,80% 100%,0 100%);opacity:.95"></div>
<div class="a" style="left:170px;top:594px;width:18px;height:18px;border-radius:50%;background:radial-gradient(circle at 40% 60%,#1f57c6 0,#1f57c6 28%,#2aa4e8 30%,#34c6d8 60%,#62d26a 100%)"></div>
<div class="a" style="left:177px;top:601px;width:8px;height:6px;border-radius:50%;background:#1b2a5a"></div>
<div class="a" style="left:209px;top:596px;width:18px;height:14px;background:#e8c14a;border-radius:1px"></div>
<div class="a" style="left:209px;top:596px;width:8px;height:3px;background:#f5d46a"></div>
<div class="a" style="left:213px;top:602px;width:10px;height:6px;background:#3a8fd0"></div>
<div class="a" style="left:248px;top:595px;width:18px;height:16px;background:#f4f4f4;border-radius:2px"></div>
<div class="a" style="left:253px;top:600px;width:4px;height:4px;background:#f25022"></div><div class="a" style="left:258px;top:600px;width:4px;height:4px;background:#7fba00"></div>
<div class="a" style="left:253px;top:605px;width:4px;height:4px;background:#00a4ef"></div><div class="a" style="left:258px;top:605px;width:4px;height:4px;background:#ffb900"></div>
<svg style="left:287px;top:594px" width="20" height="17" viewBox="0 0 20 17"><path d="M0 6 L10 0 L20 6 L20 17 L0 17 Z" fill="#3aa0e6"/><path d="M0 6 L10 12 L20 6" fill="#8fd4ff" stroke="#a9dcff" stroke-width="0.6"/></svg>
<div class="a" style="left:318px;top:587px;width:38px;height:31px;background:#4a4d5e"></div>
<div class="a" style="left:327px;top:593px;width:19px;height:19px;border-radius:50%;background:conic-gradient(from -30deg,#db4437 0 120deg,#0f9d58 120deg 240deg,#f4b400 240deg 360deg)"></div>
<div class="a" style="left:332.5px;top:598.5px;width:8px;height:8px;border-radius:50%;background:#4285f4;border:1.5px solid #fff"></div>
<div class="a" style="left:336px;top:601px;width:11px;height:11px;border-radius:50%;background:#3a2a24"></div>
<div class="a" style="left:366px;top:594px;width:19px;height:17px;background:#2b7cd3;border-radius:2px"></div>
<div class="a" style="left:366px;top:594px;width:19px;height:5px;background:#41a5ee;border-radius:2px 2px 0 0"></div>
<div class="a" style="left:362px;top:597px;width:11px;height:11px;background:#185abd;border-radius:1.5px"></div>
<div class="t" style="left:363.5px;top:599px;font-size:8px;font-weight:700;color:#fff">W</div>
<div class="a" style="left:405px;top:593px;width:19px;height:19px;border-radius:50%;background:#d35230"></div>
<div class="a" style="left:414.5px;top:593px;width:9.5px;height:9.5px;border-radius:0 10px 0 0;background:#ff8f6b"></div>
<div class="a" style="left:401px;top:597px;width:11px;height:11px;background:#c43e1c;border-radius:1.5px"></div>
<div class="t" style="left:403.5px;top:599px;font-size:8px;font-weight:700;color:#fff">P</div>
<div class="a" style="left:444.5px;top:593px;width:19px;height:19px;border-radius:50%;background:#2d6df6"></div>
<div class="t" style="left:446px;top:600px;font-size:5.5px;font-weight:700;color:#fff">zoom</div>
<div class="a" style="left:201px;top:617px;width:36px;height:2px;background:#8ba6c9"></div>
<div class="a" style="left:318px;top:617px;width:38px;height:2px;background:#8ba6c9"></div>
<div class="a" style="left:360px;top:617px;width:32px;height:2px;background:#8ba6c9"></div>
<div class="a" style="left:399px;top:617px;width:32px;height:2px;background:#8ba6c9"></div>
<div class="a" style="left:438px;top:617px;width:32px;height:2px;background:#8ba6c9"></div>
<div class="a" style="left:164px;top:617px;width:32px;height:2px;background:#8ba6c9"></div>
<!-- tray -->
<div class="a" style="left:688px;top:594px;width:7.5px;height:17px;border-radius:2px;background:linear-gradient(90deg,#2a4fa0 50%,#d4303a 50%)"></div>
<div class="a" style="left:690px;top:597px;width:3.5px;height:10px;border-radius:2px;background:#f0f0f0"></div>
<div class="t" style="left:708px;top:598.5px;font-size:10.2px;color:#eceef2">Result</div>
<svg style="left:757px;top:600px" width="10" height="6"><path d="M0.5 5.5 L5 1 L9.5 5.5" fill="none" stroke="#d0d2d6" stroke-width="1.2"/></svg>
<svg style="left:776px;top:596px" width="10" height="13" viewBox="0 0 10 13"><rect x="0.6" y="2.5" width="6" height="8" fill="none" stroke="#c8c8c8" stroke-width="1.1"/><path d="M6.6 5 L9.4 3.5 L9.4 9.5 L6.6 8" fill="none" stroke="#c8c8c8" stroke-width="1.1"/><path d="M1 0.6 L7 0.6 M1 12.4 L7 12.4" stroke="#c8c8c8" stroke-width="1"/></svg>
<svg style="left:792px;top:598px" width="15" height="10" viewBox="0 0 15 10"><path d="M3.5 10 Q0 10 0 7 Q0 4.5 3 4.3 Q3.8 0.5 7.5 0.5 Q11 0.5 11.8 4 Q15 4.2 15 7.2 Q15 10 12 10 Z" fill="#e4e4e4"/></svg>
<svg style="left:814px;top:595px" width="8" height="15" viewBox="0 0 8 15"><rect x="0.5" y="0" width="7" height="11" rx="1" fill="#e8e8e8"/><rect x="2" y="11" width="4" height="3.5" fill="#c8c8c8"/></svg>
<svg style="left:830px;top:597px" width="15" height="11" viewBox="0 0 15 11"><path d="M1 0 L1 3 M3 0 L3 3 M0 3 L4 3 L4 5 L2 6 L2 9" fill="none" stroke="#e0e0e0" stroke-width="1"/><rect x="4" y="3" width="11" height="7" fill="#e8e8e8"/></svg>
<svg style="left:849px;top:596px" width="14" height="13" viewBox="0 0 14 13"><path d="M1 12 Q1 2 13 1 M4 12 Q4 5 13 4 M7 12 Q7 8 13 7" fill="none" stroke="#d4d4d4" stroke-width="1.1"/><circle cx="12" cy="11.5" r="1" fill="#e0e0e0"/></svg>
<svg style="left:867px;top:596px" width="15" height="13" viewBox="0 0 15 13"><rect x="0.6" y="0.6" width="13.8" height="10.5" fill="none" stroke="#d8d8d8" stroke-width="1.1"/><path d="M3 9 Q3 5 8 4" fill="none" stroke="#d8d8d8" stroke-width="1.2"/><path d="M7 2.5 L9 4 L7 5.5" fill="none" stroke="#d8d8d8" stroke-width="1"/><circle cx="10.5" cy="10" r="3" fill="#e81c2a"/></svg>
<div class="t" style="left:890.5px;top:598.5px;font-size:10px;color:#eceef2;letter-spacing:-0.3px">УКР</div>
<div class="t" style="left:930px;top:592px;font-size:9.4px;color:#eceef2">12:05</div>
<div class="t" style="left:917px;top:605.5px;font-size:9.4px;color:#eceef2">27.03.2025</div>
<svg style="left:978px;top:596px" width="15" height="14" viewBox="0 0 15 14"><path d="M0.5 0.5 L14 0.5 L14 10 L7 10 L4 13 L4 10 L0.5 10 Z" fill="#f0f0f0"/><path d="M3 3 L11 3 M3 5 L11 5 M3 7 L8 7" stroke="#9a9a9a" stroke-width="0.8"/><circle cx="11.5" cy="10.5" r="2.5" fill="#1e2336" stroke="#f0f0f0" stroke-width="0.9"/></svg>
<div class="a" style="left:1007px;top:587px;width:1px;height:32px;background:#8a8c94"></div>

<!-- VIDEO -->
<div class="a" style="left:1014.5px;top:349px;width:1.2px;height:24px;background:#9a9a9a"></div>
<div class="a" style="left:1017.5px;top:349px;width:1.2px;height:24px;background:#9a9a9a"></div>
<div class="a" style="left:1022px;top:265px;width:252px;height:142px;overflow:hidden;background:#e4e2e4">
<svg style="left:0;top:0" width="252" height="142" viewBox="0 0 252 142">
 <defs>
  <linearGradient id="wall" x1="0" y1="0" x2="1" y2="0"><stop offset="0" stop-color="#ebeaee"/><stop offset="0.45" stop-color="#e7e4e6"/><stop offset="1" stop-color="#dcd7cc"/></linearGradient>
  <filter id="bl" x="-10%" y="-10%" width="120%" height="120%"><feGaussianBlur stdDeviation="1.5"/></filter>
  <filter id="bl2" x="-10%" y="-10%" width="120%" height="120%"><feGaussianBlur stdDeviation="0.9"/></filter>
  <radialGradient id="face" cx="0.5" cy="0.42" r="0.62"><stop offset="0" stop-color="#ecd6d0"/><stop offset="0.65" stop-color="#e2c6bf"/><stop offset="1" stop-color="#c8a298"/></radialGradient>
  <linearGradient id="hairg" x1="0" y1="0" x2="1" y2="0"><stop offset="0" stop-color="#33251e"/><stop offset="0.3" stop-color="#523f33"/><stop offset="0.7" stop-color="#503c2f"/><stop offset="1" stop-color="#30231c"/></linearGradient>
 </defs>
 <rect x="0" y="0" width="252" height="142" fill="url(#wall)"/>
 <g filter="url(#bl)">
  <path d="M0 68 Q50 65 110 67 L200 63 Q230 60 252 61 L252 142 L0 142 Z" fill="#3e4648"/>
  <path d="M49 72 Q70 74 90 79 L94 120 L56 124 Q40 120 40 110 Q40 90 49 72 Z" fill="#6c717a"/>
  <path d="M58 76 L92 112 M46 104 L90 90" stroke="#5c626b" stroke-width="1" fill="none"/>
  <path d="M205 74 Q228 70 246 73 L248 142 L210 142 Q200 110 205 74 Z" fill="#4b5553"/>
 </g>
 <g filter="url(#bl2)">
  <!-- hair -->
  <path d="M119 0 L168 0 Q184 10 189 34 Q194 62 197 89 Q200 105 210 114 Q218 120 221 124 L200 128 L106 128 Q94 124 93 114 Q89 95 90 70 Q92 36 102 15 Q109 3 119 0 Z" fill="url(#hairg)"/>
  <!-- neck -->
  <path d="M120 104 L172 104 L176 142 L116 142 Z" fill="#d4b0a6"/><path d="M118 106 Q146 124 174 104 L174 116 Q146 128 118 118 Z" fill="#b89086" opacity="0.7"/>
  <!-- face -->
  <path d="M142 12 Q112 13 108 36 Q104 55 105 72 Q106 88 111 98 Q120 112 146 116 Q164 114 172 100 Q181 88 183 70 Q185 50 181 32 Q174 12 142 12 Z" fill="url(#face)"/>
  <!-- hair parting shadow -->
  <path d="M140 0 Q142 6 142 12" stroke="#3a2a22" stroke-width="1.5" fill="none"/>
  <!-- shirt -->
  <path d="M57 142 L58 128 Q62 121 88 118 Q100 118 108 128 Q124 142 146 142 Q168 142 189 128 Q195 122 205 123 L226 124 Q236 128 243 142 Z" fill="#2d6dd6"/>
  <!-- brows -->
  <path d="M110 43 Q120 37 131 39" stroke="#5e463c" stroke-width="2.4" fill="none"/>
  <path d="M155 37 Q166 34 175 39" stroke="#5e463c" stroke-width="2.4" fill="none"/>
  <!-- eye sockets -->
  <ellipse cx="124" cy="52" rx="10" ry="5" fill="#cfa9a0" opacity="0.55"/>
  <ellipse cx="164" cy="49" rx="10" ry="5" fill="#cfa9a0" opacity="0.55"/>
  <!-- eyes -->
  <path d="M115 56 Q124 50 134 56 Q124 61 115 56 Z" fill="#7a5e58"/><ellipse cx="124.5" cy="56" rx="4" ry="3" fill="#2e2220"/><path d="M115 56 Q124 50 134 56" stroke="#2a1e1c" stroke-width="1.3" fill="none"/>
  <path d="M155 53 Q164 47 174 53 Q164 58 155 53 Z" fill="#7a5e58"/><ellipse cx="164.5" cy="53" rx="4" ry="3" fill="#2e2220"/><path d="M155 53 Q164 47 174 53" stroke="#2a1e1c" stroke-width="1.3" fill="none"/>
  <!-- nose -->
  <path d="M138 72 Q137 78 140 80 Q145 82 151 79" stroke="#b99086" stroke-width="1.8" fill="none"/>
  <ellipse cx="145" cy="70" rx="4" ry="6" fill="#f2e2dc" opacity="0.6"/>
  <!-- lips -->
  <path d="M132 95 Q140 91 146 93 Q152 91 160 95 Q147 101 132 95 Z" fill="#a95c5e"/>
 </g>
</svg>
<svg style="left:3px;top:128px" width="14" height="11"><rect x="0" y="7" width="2.6" height="4" fill="#fff"/><rect x="3.6" y="4.5" width="2.6" height="6.5" fill="#fff"/><rect x="7.2" y="2" width="2.6" height="9" fill="#fff"/><rect x="10.8" y="0" width="2.6" height="11" fill="#fff"/></svg>
<div class="t" style="left:21.5px;top:127.5px;font-size:11.5px;color:#f4f4f4;letter-spacing:0.3px">Софія</div>
</div>

<!-- ZOOM BOTTOM TOOLBAR -->
<div class="a" style="left:0;top:627px;width:1280px;height:55px;background:#000"></div>
<!-- audio -->
<svg style="left:38px;top:636px" width="22" height="23" viewBox="0 0 22 23"><rect x="7" y="0.8" width="8" height="13" rx="4" fill="none" stroke="#f2f2f2" stroke-width="1.5"/><path d="M3.5 10 Q3.5 17.5 11 17.5 Q18.5 17.5 18.5 10" fill="none" stroke="#f2f2f2" stroke-width="1.5"/><path d="M11 17.5 L11 21.5 M6.5 21.8 L15.5 21.8" stroke="#f2f2f2" stroke-width="1.5"/><path d="M0.5 21 L21 1" stroke="#000" stroke-width="3.5"/><path d="M0.5 21 L21 1" stroke="#e0245e" stroke-width="2"/></svg>
<svg style="left:74px;top:645px" width="9" height="6"><path d="M0.8 5 L4.5 1.2 L8.2 5" fill="none" stroke="#e6e6e6" stroke-width="1.3"/></svg>
<div class="t" style="left:36.5px;top:664.5px;font-size:12px;color:#dcdcdc">Звук</div>
<!-- video -->
<svg style="left:124px;top:636px" width="24" height="22" viewBox="0 0 24 22"><rect x="1" y="5.5" width="15" height="12" rx="1.5" fill="none" stroke="#f2f2f2" stroke-width="1.5"/><path d="M16 9.5 L22.5 5.5 L22.5 17.5 L16 13.5" fill="none" stroke="#f2f2f2" stroke-width="1.5"/><path d="M1 21 L21.5 1" stroke="#000" stroke-width="3.5"/><path d="M1 21 L21.5 1" stroke="#e0245e" stroke-width="2"/></svg>
<svg style="left:166px;top:645px" width="9" height="6"><path d="M0.8 5 L4.5 1.2 L8.2 5" fill="none" stroke="#e6e6e6" stroke-width="1.3"/></svg>
<div class="t" style="left:120.5px;top:664.5px;font-size:11.3px;color:#dcdcdc">Видео</div>
<!-- participants -->
<svg style="left:417px;top:639px" width="18" height="17" viewBox="0 0 18 17"><circle cx="5" cy="3.5" r="2.6" fill="none" stroke="#f2f2f2" stroke-width="1.3"/><circle cx="12.5" cy="7" r="3" fill="none" stroke="#f2f2f2" stroke-width="1.3"/><path d="M1 13 Q1 8 5 8 Q6.5 8 7.5 8.8" fill="none" stroke="#f2f2f2" stroke-width="1.3"/><rect x="6.5" y="11.5" width="11" height="5" rx="2.5" fill="none" stroke="#f2f2f2" stroke-width="1.3"/><path d="M1 13 Q1 15.5 4 15.5 L6 15.5" fill="none" stroke="#f2f2f2" stroke-width="1.3"/></svg>
<div class="t" style="left:441.5px;top:639px;font-size:11.5px;color:#dcdcdc">31</div>
<svg style="left:471.5px;top:645px" width="9" height="6"><path d="M0.8 5 L4.5 1.2 L8.2 5" fill="none" stroke="#e6e6e6" stroke-width="1.3"/></svg>
<div class="t" style="left:399px;top:664.5px;font-size:11.3px;color:#dcdcdc">Участники</div>
<!-- chat -->
<svg style="left:518px;top:636px" width="22" height="21" viewBox="0 0 22 21"><path d="M7 4 Q7 1 10.5 1 L18 1 Q21 1 21 4 L21 9 Q21 12 18 12" fill="none" stroke="#f2f2f2" stroke-width="1.3"/><path d="M4 5.5 L14 5.5 Q17 5.5 17 8.5 L17 13 Q17 16 14 16 L8.5 16 L5 19.5 L5 16 L4 16 Q1 16 1 13 L1 8.5 Q1 5.5 4 5.5 Z" fill="#000" stroke="#f2f2f2" stroke-width="1.3"/><circle cx="5.5" cy="10.8" r="1" fill="#f2f2f2"/><circle cx="9" cy="10.8" r="1" fill="#f2f2f2"/><circle cx="12.5" cy="10.8" r="1" fill="#f2f2f2"/></svg>
<svg style="left:556px;top:645px" width="9" height="6"><path d="M0.8 5 L4.5 1.2 L8.2 5" fill="none" stroke="#e6e6e6" stroke-width="1.3"/></svg>
<div class="t" style="left:520px;top:664.5px;font-size:11.5px;color:#dcdcdc">Чат</div>
<!-- react -->
<svg style="left:606px;top:638px" width="24" height="20" viewBox="0 0 24 20"><path d="M12 19 L3.2 11 Q0.8 8.6 0.8 6 Q0.8 1 5.8 1 Q9.5 1 12 4.5 Q14.5 1 18.2 1 Q23.2 1 23.2 6 Q23.2 8.6 20.8 11 Z" fill="none" stroke="#f2f2f2" stroke-width="1.4" stroke-linejoin="round" transform="rotate(-8 12 10)"/></svg>
<svg style="left:648.5px;top:645px" width="9" height="6"><path d="M0.8 5 L4.5 1.2 L8.2 5" fill="none" stroke="#e6e6e6" stroke-width="1.3"/></svg>
<div class="t" style="left:579px;top:664.5px;font-size:11.2px;color:#dcdcdc">Отреагировать</div>
<!-- share -->
<div class="a" style="left:699px;top:638px;width:23px;height:19px;background:#1ed66e;border-radius:3px"></div>
<svg style="left:705px;top:641px" width="11" height="13" viewBox="0 0 11 13"><path d="M5.5 12.5 L5.5 4 M1 5.8 L5.5 1.2 L10 5.8" fill="none" stroke="#0a0a0a" stroke-width="2.2"/></svg>
<div class="t" style="left:680px;top:664.5px;font-size:11.5px;color:#dcdcdc">Поделиться</div>
<!-- apps -->
<svg style="left:787px;top:637px" width="21" height="21" viewBox="0 0 21 21"><path d="M1 8 L1 4 Q1 1 4 1 L8 1" fill="none" stroke="#f2f2f2" stroke-width="1.4"/><circle cx="15.5" cy="5.5" r="4" fill="none" stroke="#f2f2f2" stroke-width="1.4"/><circle cx="5.5" cy="15.5" r="4" fill="none" stroke="#f2f2f2" stroke-width="1.4"/><path d="M13 20 L17 20 Q20 20 20 17 L20 13" fill="none" stroke="#f2f2f2" stroke-width="1.4"/></svg>
<div class="t" style="left:764px;top:664.5px;font-size:11.6px;color:#dcdcdc">Приложения</div>
<!-- record -->
<svg style="left:866px;top:637px" width="22" height="22" viewBox="0 0 22 22"><circle cx="11" cy="11" r="10" fill="none" stroke="#f2f2f2" stroke-width="1.5"/><circle cx="11" cy="11" r="4.6" fill="#f2f2f2"/></svg>
<div class="t" style="left:858.5px;top:664.5px;font-size:11.5px;color:#dcdcdc">Запись</div>
<!-- more -->
<svg style="left:952px;top:637px" width="22" height="22" viewBox="0 0 22 22"><circle cx="11" cy="11" r="10" fill="none" stroke="#f2f2f2" stroke-width="1.5"/><circle cx="6.5" cy="11" r="1.3" fill="#f2f2f2"/><circle cx="11" cy="11" r="1.3" fill="#f2f2f2"/><circle cx="15.5" cy="11" r="1.3" fill="#f2f2f2"/></svg>
<div class="t" style="left:922px;top:664.5px;font-size:11.5px;color:#dcdcdc">Дополнительно</div>
<!-- leave -->
<svg style="left:1222px;top:636px" width="25" height="23" viewBox="0 0 25 23"><path d="M16 1 L24 1 L24 19 L16 22 Z M16 1 L21 4 L21 20" fill="none" stroke="#e0245e" stroke-width="1.4"/><circle cx="9" cy="4" r="2.4" fill="#000" stroke="#f2f2f2" stroke-width="1.3"/><path d="M7 8 L12 8.5 L14.5 13 M7 8 L5 14 L3 20.5 M7.5 14.5 L10.5 16.5 L11 21.5 M7 8 L3 10.5 L2 14" fill="none" stroke="#f2f2f2" stroke-width="1.4" stroke-linejoin="round" stroke-linecap="round"/></svg>
<div class="t" style="left:1218.5px;top:664.5px;font-size:11.5px;color:#dcdcdc">Выйти</div>

<!-- WINDOWS TASKBAR -->
<div class="a" style="left:0;top:682px;width:1280px;height:38px;background:#1c2d3f"></div>
<svg style="left:15px;top:693px" width="16" height="16" viewBox="0 0 16 16"><path d="M0 2.2 L7 1.2 L7 7.5 L0 7.5 Z M8 1 L16 0 L16 7.5 L8 7.5 Z M0 8.5 L7 8.5 L7 14.8 L0 13.8 Z M8 8.5 L16 8.5 L16 16 L8 15 Z" fill="#f4f4f4"/></svg>
<div class="a" style="left:45px;top:682px;width:322px;height:38px;background:#f0f0f0"></div>
<svg style="left:56px;top:694px" width="16" height="16" viewBox="0 0 16 16"><circle cx="10" cy="6" r="5" fill="none" stroke="#1a1a1a" stroke-width="1.3"/><path d="M6.4 9.6 L0.8 15.2" stroke="#1a1a1a" stroke-width="1.5"/></svg>
<div class="t" style="left:83px;top:694px;font-size:14px;color:#2a2a2a">Щоби почати пошук, введіть запит тут</div>
<svg style="left:382px;top:693px" width="15" height="16" viewBox="0 0 15 16"><rect x="2.5" y="3.5" width="8" height="9" fill="none" stroke="#e8e8e8" stroke-width="1.3"/><path d="M0 1 L12 1 M0 15 L12 15 M13.5 0 L13.5 4.5 M13.5 6 L13.5 16" stroke="#e8e8e8" stroke-width="1.3"/></svg>
<div class="a" style="left:427px;top:692px;width:20px;height:17px;background:#e9b94a;border-radius:1px"></div>
<div class="a" style="left:427px;top:692px;width:9px;height:3px;background:#f7d774"></div>
<div class="a" style="left:431px;top:700px;width:12px;height:7px;background:#3a8fd0"></div>
<div class="a" style="left:473px;top:690px;width:22px;height:22px;border-radius:50%;background:conic-gradient(from -30deg,#db4437 0 120deg,#0f9d58 120deg 240deg,#f4b400 240deg 360deg)"></div>
<div class="a" style="left:479.5px;top:696.5px;width:9px;height:9px;border-radius:50%;background:#4285f4;border:1.8px solid #fff"></div>
<div class="a" style="left:484px;top:700px;width:12px;height:12px;border-radius:50%;background:#9b3fc9"></div>
<div class="t" style="left:486.5px;top:702.5px;font-size:7.5px;color:#fff">M</div>
<div class="a" style="left:519px;top:690px;width:19px;height:21px;background:#f4f4f4;border-radius:1px"></div>
<div class="a" style="left:526px;top:693px;width:10px;height:1px;background:#333"></div><div class="a" style="left:526px;top:696px;width:10px;height:1px;background:#333"></div><div class="a" style="left:526px;top:699px;width:10px;height:1px;background:#333"></div><div class="a" style="left:526px;top:702px;width:10px;height:1px;background:#333"></div><div class="a" style="left:526px;top:705px;width:10px;height:1px;background:#333"></div>
<div class="a" style="left:517px;top:693px;width:12px;height:14px;background:#2b579a"></div>
<div class="t" style="left:518.5px;top:696.5px;font-size:8.5px;font-weight:700;color:#fff">W</div>
<div class="a" style="left:565px;top:690px;width:22px;height:22px;border-radius:50%;background:radial-gradient(circle at 40% 60%,#1f57c6 0,#1f57c6 28%,#2aa4e8 30%,#34c6d8 60%,#62d26a 100%)"></div>
<div class="a" style="left:572px;top:698px;width:9px;height:7px;border-radius:50%;background:#1b3a6a"></div>
<div class="a" style="left:599px;top:682px;width:45px;height:38px;background:#4a5663"></div>
<div class="a" style="left:609px;top:690px;width:23px;height:23px;border-radius:50%;background:#2160e6"></div>
<div class="t" style="left:612px;top:696px;font-size:10px;font-weight:700;color:#fff;letter-spacing:-0.5px">zm</div>
<div class="a" style="left:465px;top:718px;width:36px;height:2px;background:#7aa7d8"></div>
<div class="a" style="left:511px;top:718px;width:37px;height:2px;background:#7aa7d8"></div>
<div class="a" style="left:599px;top:718px;width:45px;height:2px;background:#7aa7d8"></div>
<svg style="left:1050px;top:698px" width="13" height="8"><path d="M0.8 7 L6.5 1.2 L12.2 7" fill="none" stroke="#e8e8e8" stroke-width="1.4"/></svg>
<svg style="left:1073px;top:693px" width="10" height="17" viewBox="0 0 10 17"><rect x="2" y="0" width="6" height="11" rx="3" fill="#f0f0f0"/><path d="M0.7 7 Q0.7 12.5 5 12.5 Q9.3 12.5 9.3 7" fill="none" stroke="#f0f0f0" stroke-width="1.2"/><path d="M5 12.5 L5 16 M2.5 16.2 L7.5 16.2" stroke="#f0f0f0" stroke-width="1.2"/></svg>
<svg style="left:1093px;top:695px" width="18" height="12" viewBox="0 0 18 12"><path d="M1.5 0 L1.5 2.5 M3.5 0 L3.5 2.5 M0.5 2.5 L4.5 2.5 L4.5 5 L2.5 6.2 L2.5 10" fill="none" stroke="#f0f0f0" stroke-width="1.1"/><rect x="5.5" y="3" width="11.5" height="7.5" rx="1" fill="none" stroke="#f0f0f0" stroke-width="1.2"/><rect x="7" y="4.5" width="8.5" height="4.5" fill="#f0f0f0"/></svg>
<svg style="left:1117px;top:694px" width="15" height="15" viewBox="0 0 15 15"><path d="M0.7 5 L3.5 5 L7 1.5 L7 13.5 L3.5 10 L0.7 10 Z" fill="none" stroke="#f0f0f0" stroke-width="1.2"/><path d="M9 5 Q10.5 7.5 9 10 M11 3.5 Q13.5 7.5 11 11.5 M13 2 Q16.5 7.5 13 13" fill="none" stroke="#f0f0f0" stroke-width="1.1"/></svg>
<div class="t" style="left:1141px;top:696px;font-size:11px;color:#f0f0f0;letter-spacing:-0.3px">УКР</div>
<div class="t" style="left:1187px;top:687px;font-size:11px;color:#f0f0f0;letter-spacing:-0.2px">12:05</div>
<div class="t" style="left:1174px;top:703.5px;font-size:10.8px;color:#f0f0f0;letter-spacing:-0.35px">27.03.2025</div>
<svg style="left:1241px;top:693px" width="16" height="16" viewBox="0 0 16 16"><path d="M0.7 0.7 L15.3 0.7 L15.3 11.5 L10 11.5 L8 14.5 L6 11.5 L0.7 11.5 Z" fill="none" stroke="#f0f0f0" stroke-width="1.2"/></svg>
<div class="a" style="left:1275px;top:682px;width:1px;height:38px;background:#6a7a8a"></div>

</body></html>
